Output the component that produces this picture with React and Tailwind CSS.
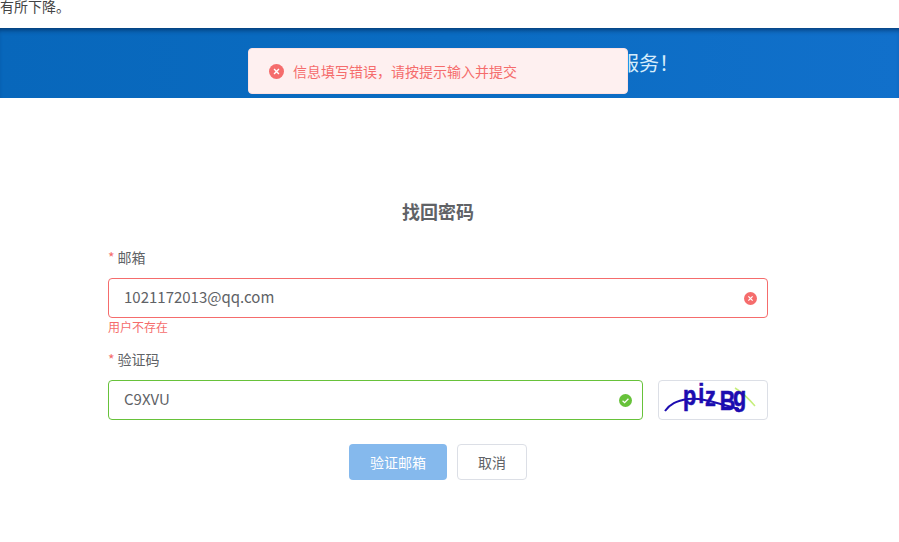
import React from 'react';

const FONT = 'font-["Noto_Sans_CJK_SC","Noto_Sans",sans-serif]';

const StatusIcon = ({ type = 'error', className = '' }) => (
    <svg viewBox="0 0 16 16" className={className}>
        <circle cx="8" cy="8" r="8" fill={type === 'error' ? '#f56c6c' : '#67c23a'} />
        {type === 'error' ? (
            <path d="M5.4 5.4l5.2 5.2M10.6 5.4l-5.2 5.2" stroke="#fff" strokeWidth="1.5" fill="none" />
        ) : (
            <path d="M4.4 8.3l2.5 2.4 4.7-4.9" stroke="#fff" strokeWidth="1.5" fill="none" />
        )}
    </svg>
);

// Captcha picture: noisy strokes over real letters
const Captcha = () => (
    <svg viewBox="0 0 108 38" className="w-full h-full">
        <path d="M76 7 C84 12 90 18 96 25" stroke="#c6ee7a" strokeWidth="1.5" fill="none" />
        <path d="M6 30 C11 23 17 20 29 18 C42 16 60 23 80 28" stroke="#1c0cb0" strokeWidth="2" fill="none" />
        <text
            transform="scale(0.8 1)"
            x="30 49 57.5 76 92.5"
            y="24 22 25 29 25"
            fill="#1c0cb0"
            stroke="#1c0cb0"
            strokeWidth="0.6"
            fontSize="27"
            fontFamily="'Liberation Sans', sans-serif"
            fontWeight="700"
        >
            pizBg
        </text>
    </svg>
);

const Label = ({ children }) => (
    <div className="h-5 flex items-center text-sm text-[#606266]">
        <span className="text-[#f56c6c] mr-[3px]">*</span>
        {children}
    </div>
);

const Field = ({ value, status, className = '' }) => (
    <div
        className={`h-10 flex items-center justify-between rounded border bg-white pl-[15px] pr-[10px] ${status === 'error' ? 'border-[#f56c6c]' : 'border-[#67c23a]'} ${className}`}
    >
        <span className="text-[15px] leading-[20px] -mt-[2px] text-[#606266]">{value}</span>
        <StatusIcon type={status} className="w-[13px] h-[13px]" />
    </div>
);

export default function App() {
    return (
        <div className={`relative h-[542px] overflow-hidden bg-white ${FONT}`}>
            {/* Article tail above the banner */}
            <div className="h-7 text-sm leading-[12px] text-[#444]">有所下降。</div>

            {/* Banner */}
            <div className="h-[70px] flex items-center justify-end pr-[220px] bg-gradient-to-r from-[#0867bb] via-[#0a6cc2] to-[#1170cb] shadow-[inset_0_5px_5px_-3px_rgba(0,30,70,0.65)]">
                <span className="text-xl text-[#d5ecfb]">服务！</span>
            </div>

            {/* Toast */}
            <div className="absolute left-[248px] top-[48px] w-[380px] h-[46px] flex items-center rounded border border-[#fde2e2] bg-[#fef0f0] pl-[20px]">
                <StatusIcon type="error" className="w-[15px] h-[15px] mr-[9px]" />
                <span className="text-sm text-[#f56c6c]">信息填写错误，请按提示输入并提交</span>
            </div>

            {/* Form */}
            <div className="ml-[108px] w-[660px] pt-[101px]">
                <h1 className="h-6 flex items-center justify-center text-lg font-bold text-[#606266]">找回密码</h1>

                <div className="mt-[24px]">
                    <Label>邮箱</Label>
                    <Field value="1021172013@qq.com" status="error" className="mt-[11px]" />
                    <div className="h-[18px] flex items-center text-xs text-[#f56c6c]">用户不存在</div>
                </div>

                <div className="mt-[13px]">
                    <Label>验证码</Label>
                    <div className="mt-[11px] flex gap-[15px]">
                        <Field value="C9XVU" status="success" className="flex-1" />
                        <div className="w-[110px] h-10 rounded border border-[#dcdfe6] bg-white overflow-hidden">
                            <Captcha />
                        </div>
                    </div>
                </div>

                <div className="mt-6 flex justify-center gap-[10px]">
                    <button className="w-[98px] h-9 rounded bg-[#85b9ed] text-sm text-white">验证邮箱</button>
                    <button className="w-[70px] h-9 rounded border border-[#dcdfe6] bg-white text-sm text-[#606266]">取消</button>
                </div>
            </div>
        </div>
    );
}
